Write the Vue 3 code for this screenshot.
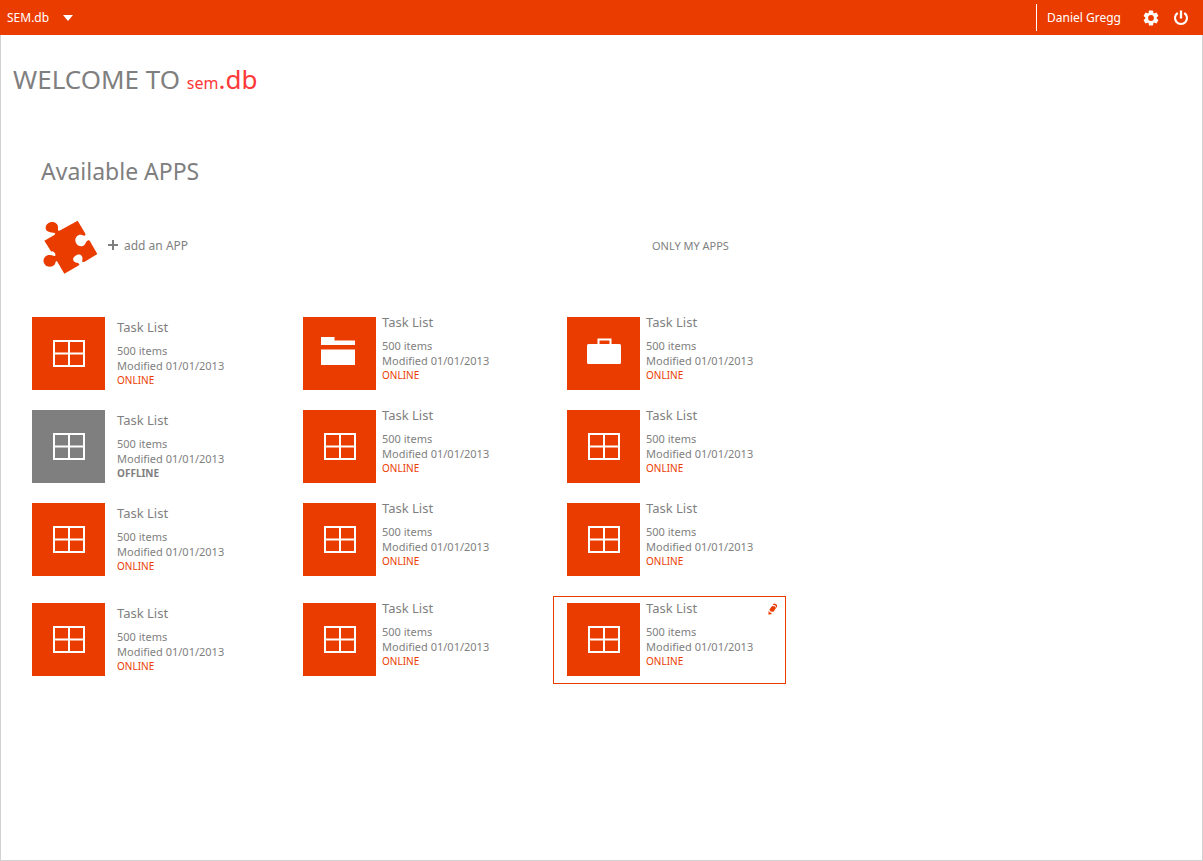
<script setup>
import { ref } from 'vue'

const statuses = [
  ['ONLINE', 'ONLINE', 'ONLINE'],
  ['OFFLINE', 'ONLINE', 'ONLINE'],
  ['ONLINE', 'ONLINE', 'ONLINE'],
  ['ONLINE', 'ONLINE', 'ONLINE'],
]

const icons = { 1: 'folder', 2: 'case' }

const apps = statuses.flat().map((status, id) => ({
  id,
  status,
  title: 'Task List',
  items: '500 items',
  modified: 'Modified 01/01/2013',
  icon: icons[id] || 'grid',
}))

const selected = ref(11)
</script>

<template>
  <div class="page">
    <header class="bar">
      <button class="brand" type="button">
        SEM.db
        <svg width="10" height="6" viewBox="0 0 10 6" aria-hidden="true"><path d="M0 0h10L5 6z" fill="#fff" /></svg>
      </button>
      <div class="account">
        <a class="user" href="#">Daniel Gregg</a>
        <button type="button" aria-label="Settings">
          <svg width="16" height="16" viewBox="0 0 16 16" aria-hidden="true">
            <g fill="#fff">
              <rect x="5.8" y="0.5" width="4.4" height="15" rx="0.8" />
              <rect x="5.8" y="0.5" width="4.4" height="15" rx="0.8" transform="rotate(60 8 8)" />
              <rect x="5.8" y="0.5" width="4.4" height="15" rx="0.8" transform="rotate(120 8 8)" />
              <circle cx="8" cy="8" r="5.8" />
            </g>
            <circle cx="8" cy="8" r="2.9" fill="#eb3c00" />
          </svg>
        </button>
        <button type="button" aria-label="Sign out">
          <svg width="16" height="16" viewBox="0 0 16 16" fill="none" stroke="#fff" aria-hidden="true">
            <path d="M4.700 3a6 6 0 1 0 6.600 0" stroke-width="2.1" />
            <path d="M8 0.500v8" stroke-width="2.3" />
          </svg>
        </button>
      </div>
    </header>

    <main class="content">
      <h1>WELCOME TO <span class="small">sem</span><span class="accent">.db</span></h1>
      <h2>Available APPS</h2>

      <div class="tools">
        <button class="add" type="button">
          <svg class="puzzle" width="55" height="54" viewBox="71 212 165 162" aria-hidden="true">
            <path
              fill="#eb3c00"
              d="M175 214L197 251C201 259 196 261 188 257C178 253 168 262 168 272C168 285 179 293 190 290C201 287 197 276 207 273C211 272 213 277 215 281L234 314L196 337C191 340 187 338 189 331C192 319 182 313 172 317C161 322 158 332 166 338C171 341 178 339 180 345C180 348 177 349 174 351L135 373L114 337C112 333 109 336 108 341C105 352 92 355 81 350C71 344 70 330 77 323C84 315 96 317 104 320C109 321 109 316 107 312C103 308 101 304 96 307L75 274L105 257C110 254 108 250 101 250C88 249 78 245 79 235C79 224 90 216 102 218C112 220 117 228 116 236C115 244 118 246 123 243Z"
            />
          </svg>
          <svg class="plus" width="10" height="10" viewBox="0 0 10 10" aria-hidden="true"><path d="M5 0v10M0 5h10" stroke="#7f7f7f" stroke-width="2" /></svg>
          add an APP
        </button>
        <button class="filter" type="button">ONLY MY APPS</button>
      </div>

      <ul class="apps">
        <li
          v-for="app in apps"
          :key="app.id"
          class="card"
          :class="{ selected: selected === app.id, offline: app.status === 'OFFLINE' }"
          @click="selected = app.id"
        >
          <div class="tile">
            <svg v-if="app.icon === 'grid'" width="32" height="28" viewBox="0 0 32 28" aria-hidden="true">
              <path d="M1 1h30v25H1zM16 1v25M1 13.500h30" fill="none" stroke="#fff" stroke-width="2" />
            </svg>
            <svg v-else-if="app.icon === 'folder'" width="38" height="34" viewBox="0 0 38 34" aria-hidden="true">
              <path d="M0 0h13.500v3.500H34V8H0zM0 12.500h34V28H0z" fill="#fff" />
            </svg>
            <svg v-else width="34" height="32" viewBox="0 0 34 32" aria-hidden="true">
              <path d="M11.500 7V1.500h12V7" fill="none" stroke="#fff" stroke-width="2" />
              <rect y="6" width="34" height="20" rx="1.500" fill="#fff" />
            </svg>
          </div>
          <div class="info">
            <h3>{{ app.title }}</h3>
            <p>{{ app.items }}</p>
            <p>{{ app.modified }}</p>
            <p class="status">{{ app.status }}</p>
          </div>
          <button v-if="selected === app.id" class="edit" type="button" aria-label="Edit app">
            <svg width="10" height="12" viewBox="0 0 10 12" fill="#eb3c00" aria-hidden="true">
              <path d="M5 1L7 0.500L9 2L9 4.500L8 4.300L7.500 2.500L5 1.800zM4 3L7 3.500L8 5L5.500 8.800L2.500 8.500L1.500 6.500zM0.800 7.500L1.700 9.500L4 10L3 11.200L0.300 11.500z" />
            </svg>
          </button>
        </li>
      </ul>
    </main>
  </div>
</template>

<style>
body {
  margin: 0;
  background: #fff;
}
</style>

<style scoped>
.page {
  box-sizing: border-box;
  display: flex;
  flex-direction: column;
  min-height: 100vh;
  font-family: "Noto Sans", "Open Sans", sans-serif;
  color: #7f7f7f;
}
button {
  display: flex;
  align-items: center;
  padding: 0;
  border: 0;
  background: none;
  color: inherit;
  font: inherit;
  cursor: pointer;
}
h1, h2, h3, p, ul {
  margin: 0;
  padding: 0;
  font-weight: 400;
}
.bar {
  display: flex;
  justify-content: space-between;
  align-items: center;
  height: 35px;
  padding: 0 14px 0 7px;
  background: #eb3c00;
  color: #fff;
  font-size: 12px;
}
.brand {
  gap: 14px;
}
.account {
  display: flex;
  align-items: center;
  gap: 14px;
}
.user {
  padding: 0 8px 0 10px;
  border-left: 1px solid #fff;
  color: #fff;
  line-height: 27px;
  text-decoration: none;
}
.content {
  flex: 1;
  padding: 24px 12px;
  border: 1px solid #d2d2d2;
  border-top: 0;
}
h1 {
  font-size: 26px;
  line-height: 40px;
}
.small {
  color: #ff3838;
  font-size: 16px;
}
.accent {
  color: #ff3838;
}
h2 {
  margin: 52px 0 0 28px;
  font-size: 23px;
  line-height: 32px;
}
.tools {
  display: grid;
  grid-template-columns: 609fr 134fr;
  align-items: center;
  max-width: 743px;
  margin: 29px 0 0 30px;
  font-size: 12px;
}
.puzzle {
  margin: 4px 10px 0 0;
}
.plus {
  margin-right: 6px;
}
.filter {
  font-size: 11px;
}
.apps {
  display: grid;
  grid-template-columns: 271fr 264fr 233fr;
  grid-template-rows: 93px 93px 100px auto;
  align-items: start;
  max-width: 768px;
  margin: 36px 0 0 5px;
  list-style: none;
}
.card {
  position: relative;
  box-sizing: border-box;
  display: flex;
  gap: 6px;
  width: 100%;
  max-width: 233px;
  padding: 6px 13px 7px;
  border: 1px solid transparent;
}
.card:nth-child(3n + 1) {
  gap: 12px;
}
.card:nth-child(3n + 1) .info {
  padding-top: 5px;
}
.selected {
  border-color: #eb3c00;
}
.tile {
  display: flex;
  flex: none;
  align-items: center;
  justify-content: center;
  width: 73px;
  height: 73px;
  background: #eb3c00;
}
.offline .tile {
  background: #7f7f7f;
}
.info {
  font-size: 11px;
  line-height: 15px;
  white-space: nowrap;
}
h3 {
  margin-bottom: 11px;
  font-size: 13px;
  line-height: 10px;
}
.status {
  color: #eb3c00;
  font-size: 10px;
  line-height: 14px;
}
.offline .status {
  color: #7f7f7f;
  font-weight: 700;
}
.edit {
  position: absolute;
  top: 6px;
  right: 7px;
}
</style>
